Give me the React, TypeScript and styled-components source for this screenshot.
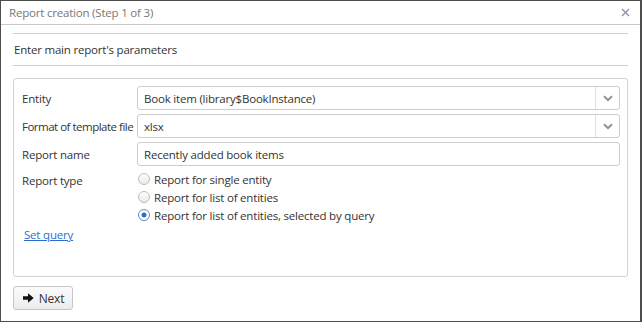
import React, { useState } from 'react';
import styled, { createGlobalStyle } from 'styled-components';

const GlobalStyle = createGlobalStyle`
  html, body {
    margin: 0;
    padding: 0;
    background: #fff;
  }
  body {
    font-family: "Open Sans", "Liberation Sans", sans-serif;
    font-size: 11.5px;
    letter-spacing: -0.2px;
    color: #333;
  }
`;

// Window
const Dialog = styled.div`
  box-sizing: border-box;
  width: 642px;
  height: 322px;
  border: 1px solid #4d4d4d;
  border-right-width: 2px;
  background: #fff;
  display: flex;
  flex-direction: column;
`;

const TitleBar = styled.div`
  height: 23px;
  display: flex;
  align-items: center;
  justify-content: space-between;
  padding: 0 8px;
  border-bottom: 1px solid #c9c9c9;
`;

const Title = styled.span`
  color: #777;
`;

const CloseButton = styled.button`
  border: none;
  background: none;
  padding: 0;
  margin-right: 1px;
  width: 10px;
  height: 10px;
  display: flex;
  cursor: pointer;
`;

const Body = styled.div`
  flex: 1;
  padding: 8px 12px 0 12px;
  display: flex;
  flex-direction: column;
`;

const Heading = styled.div`
  border-top: 1px solid #cfcfcf;
  border-bottom: 1px solid #cfcfcf;
  height: 31px;
  display: flex;
  align-items: center;
  padding-left: 1px;
  color: #333;
`;

const Panel = styled.div`
  margin-top: 12px;
  height: 199px;
  box-sizing: border-box;
  border: 1px solid #d3d3d3;
  border-radius: 3px;
  padding: 7px 7px 0 8px;
`;

const FormGrid = styled.div`
  display: grid;
  grid-template-columns: 115px 1fr;
  row-gap: 4px;
  align-items: center;
`;

const Label = styled.label<{ $top?: boolean; $narrow?: boolean }>`
  color: #333;
  white-space: nowrap;
  letter-spacing: ${p => (p.$narrow ? '-0.5px' : 'inherit')};
  align-self: ${p => (p.$top ? 'start' : 'center')};
  padding-top: ${p => (p.$top ? '3px' : '0')};
`;

const Field = styled.div`
  box-sizing: border-box;
  height: 24px;
  border: 1px solid #cdcdcd;
  border-radius: 3px;
  display: flex;
  align-items: center;
  background: #fff;
`;

const FieldText = styled.span`
  flex: 1;
  padding-left: 6px;
  color: #333;
`;

const Arrow = styled.span`
  width: 23px;
  height: 100%;
  border-left: 1px solid #e0e0e0;
  display: flex;
  align-items: center;
  justify-content: center;
`;

const RadioGroup = styled.div`
  display: flex;
  flex-direction: column;
`;

const RadioRow = styled.label`
  height: 18px;
  display: flex;
  align-items: center;
  gap: 4px;
  padding-left: 1px;
  cursor: pointer;
`;

const RadioDot = styled.span<{ $checked: boolean }>`
  box-sizing: border-box;
  width: 12px;
  height: 12px;
  border-radius: 50%;
  border: 1px solid ${p => (p.$checked ? '#5b8fd1' : '#bdbdbd')};
  background: ${p =>
    p.$checked
      ? 'radial-gradient(circle, #2f6fc3 0 2.2px, #fff 2.8px)'
      : 'linear-gradient(#fff, #e8e8e8)'};
`;

const QueryLink = styled.a`
  display: inline-block;
  margin-top: 3px;
  margin-left: 2px;
  color: #2a6fcf;
  text-decoration: underline;
  cursor: pointer;
`;

const Footer = styled.div`
  padding-top: 9px;
`;

const Button = styled.button`
  box-sizing: border-box;
  height: 24px;
  width: 60px;
  display: flex;
  align-items: center;
  justify-content: center;
  gap: 5px;
  border: 1px solid #c6c6c6;
  border-radius: 3px;
  background: linear-gradient(#fbfbfb, #ececec);
  font-family: inherit;
  font-size: 12px;
  letter-spacing: inherit;
  color: #333;
  padding: 0 0 0 1px;
  cursor: pointer;
`;

const ChevronDown = () => (
  <svg width="10" height="7" viewBox="0 0 10 7">
    <path d="M1 1.2 L5 5 L9 1.2" fill="none" stroke="#8a95a3" strokeWidth="2" />
  </svg>
);

const CloseIcon = () => (
  <svg width="9" height="9" viewBox="0 0 9 9">
    <path d="M1 1 L8 8 M8 1 L1 8" stroke="#8a96a8" strokeWidth="1.4" />
  </svg>
);

const ArrowRight = () => (
  <svg width="11" height="10" viewBox="0 0 11 10">
    <path d="M0 3.3 H5 V0.3 L10.7 5 L5 9.7 V6.7 H0 Z" fill="#111" />
  </svg>
);

const reportTypes = [
  'Report for single entity',
  'Report for list of entities',
  'Report for list of entities, selected by query',
];

const App: React.FC = () => {
  const [type, setType] = useState(2);

  return (
    <>
      <GlobalStyle />
      <Dialog>
        <TitleBar>
          <Title>Report creation (Step 1 of 3)</Title>
          <CloseButton aria-label="Close">
            <CloseIcon />
          </CloseButton>
        </TitleBar>
        <Body>
          <Heading>Enter main report's parameters</Heading>
          <Panel>
            <FormGrid>
              <Label>Entity</Label>
              <Field>
                <FieldText>Book item (library$BookInstance)</FieldText>
                <Arrow>
                  <ChevronDown />
                </Arrow>
              </Field>

              <Label $narrow>Format of template file</Label>
              <Field>
                <FieldText>xlsx</FieldText>
                <Arrow>
                  <ChevronDown />
                </Arrow>
              </Field>

              <Label>Report name</Label>
              <Field>
                <FieldText>Recently added book items</FieldText>
              </Field>

              <Label $top>Report type</Label>
              <RadioGroup>
                {reportTypes.map((t, i) => (
                  <RadioRow key={t} onClick={() => setType(i)}>
                    <RadioDot $checked={type === i} />
                    {t}
                  </RadioRow>
                ))}
              </RadioGroup>
            </FormGrid>
            <QueryLink>Set query</QueryLink>
          </Panel>
          <Footer>
            <Button>
              <ArrowRight />
              Next
            </Button>
          </Footer>
        </Body>
      </Dialog>
    </>
  );
};

export default App;
